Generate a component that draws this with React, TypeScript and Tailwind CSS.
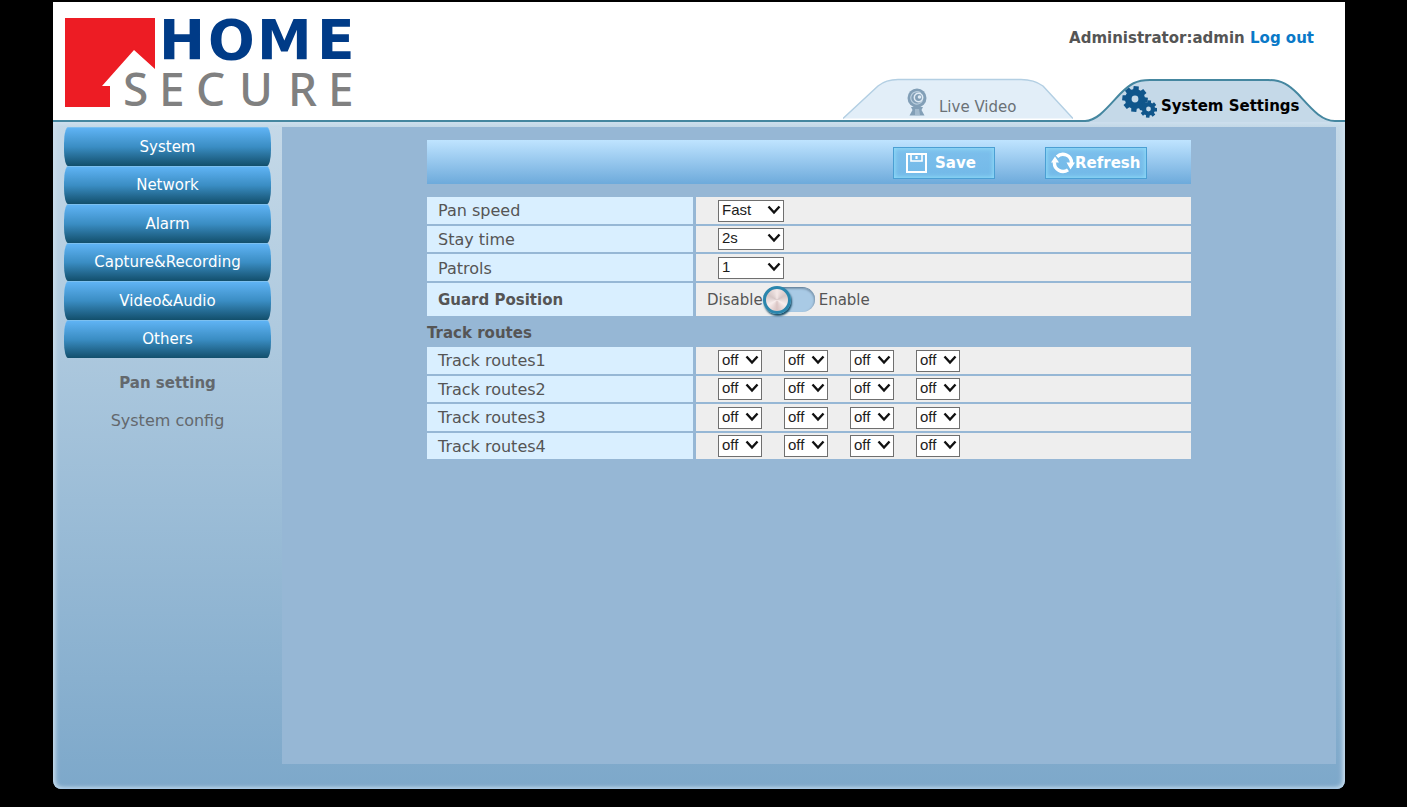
import { useState } from 'react'
import type { ReactNode } from 'react'

const menuItems = ['System', 'Network', 'Alarm', 'Capture&Recording', 'Video&Audio', 'Others']
const routes = [1, 2, 3, 4]
const points = [1, 2, 3, 4]

function gearPath(cx: number, cy: number, outer: number, inner: number, hole: number) {
  const teeth = 8
  const pts: string[] = []
  for (let i = 0; i < teeth; i++) {
    const base = (i / teeth) * Math.PI * 2 + 0.1
    const steps: [number, number][] = [[-0.28, inner], [-0.2, outer], [0.2, outer], [0.28, inner]]
    steps.forEach(([a, r]) => {
      pts.push(`${(cx + Math.cos(base + a) * r).toFixed(2)} ${(cy + Math.sin(base + a) * r).toFixed(2)}`)
    })
  }
  return `M${pts.join('L')}Z M${cx - hole} ${cy}a${hole} ${hole} 0 1 0 ${hole * 2} 0a${hole} ${hole} 0 1 0 ${-hole * 2} 0Z`
}

function GearsIcon() {
  return (
    <svg className="w-9 h-8 shrink-0" viewBox="0 0 36 32" fill="#10568b" fillRule="evenodd" aria-hidden="true">
      <path d={gearPath(14, 13, 13, 10, 3.4)} />
      <path d={gearPath(27.5, 23, 8.8, 6.6, 2.4)} />
    </svg>
  )
}

function WebcamIcon() {
  return (
    <svg className="w-5 h-7 shrink-0" viewBox="0 0 20 28" aria-hidden="true">
      <path d="M4 19h12l-1.500 3 3 5.500H2.500L5.500 22z" fill="#829fb7" />
      <path d="M8 21h4l1 6H8z" fill="#a2bace" />
      <circle cx="10" cy="10" r="9.500" fill="#829fb7" />
      <path d="M13.500 4.800a6.200 6.200 0 1 0 2 7.800" fill="none" stroke="#b9cddd" strokeWidth="1.200" />
      <circle cx="11.500" cy="9.500" r="4.200" fill="#829fb7" stroke="#dfeaf4" strokeWidth="1.500" />
      <circle cx="12.500" cy="9" r="1.800" fill="#dfeaf4" />
    </svg>
  )
}

function SaveIcon() {
  return (
    <svg className="w-[21px] h-5 shrink-0" viewBox="0 0 21 20" fill="none" stroke="white" aria-hidden="true">
      <path d="M1 1h19v18H1z" strokeWidth="2" />
      <path d="M5 1v7h11V1" strokeWidth="1.600" />
      <path d="M10.500 3v3" strokeWidth="2.200" />
    </svg>
  )
}

function RefreshIcon() {
  return (
    <svg className="w-6 h-6 shrink-0" viewBox="0 0 24 24" fill="none" stroke="white" strokeWidth="3.400" aria-hidden="true">
      <path d="M3.500 11A8.500 8.500 0 0 0 17 18.800" />
      <path d="M6 5.800A8.500 8.500 0 0 1 20.500 12" />
      <path d="M0 11.500 4 5.500 8 11.500z M24 11.500l-4.500 7-4-7z" fill="white" stroke="none" />
    </svg>
  )
}

function Logo() {
  return (
    <svg className="w-[300px] h-[100px] overflow-visible" viewBox="0 0 300 100" role="img" aria-label="Home Secure">
      <path d="M0 6h90v51L69 38 37 74h8v21H0z" fill="#ed1c24" />
      <g fontFamily="'DejaVu Sans', sans-serif" fontWeight="700" fontSize="55" fill="#003b87">
        <text x="94 143 192 252" y="47">HOME</text>
      </g>
      <g fontFamily="'Noto Sans', sans-serif" fontWeight="500" fontSize="46" fill="#808080">
        <text x="58 94 131 174 223 263" y="94">SECURE</text>
      </g>
    </svg>
  )
}

interface SelectProps {
  label: string
  id?: string
  options: string[]
  className: string
}

function Select({ label, id, options, className }: SelectProps) {
  return (
    <div className={`relative ${className}`}>
      <select
        id={id}
        aria-label={label}
        className="block w-full h-[22px] appearance-none border border-[#6f6f6f] bg-white pl-[3px] pb-[2px] font-['Liberation_Sans',Arial,sans-serif] text-[15px] leading-4 text-[#1c1c1c]"
      >
        {options.map((o) => (
          <option key={o}>{o}</option>
        ))}
      </select>
      <svg className="absolute right-[3px] top-[5px] w-[14px] h-[10px] pointer-events-none" viewBox="0 0 14 10" fill="none" aria-hidden="true">
        <path d="M1.500 1.500 7 7.500 12.500 1.500" stroke="#111" strokeWidth="2.400" />
      </svg>
    </div>
  )
}

interface RowProps {
  label: string
  htmlFor?: string
  tall?: boolean
  children: ReactNode
}

function Row({ label, htmlFor, tall, children }: RowProps) {
  return (
    <div className={`grid grid-cols-[266px_1fr] gap-[3px] ${tall ? 'h-[33px]' : ''}`}>
      <label
        htmlFor={htmlFor}
        className={`flex items-center bg-[#d9efff] pl-[11px] ${tall ? 'pt-[2px] text-[15px] font-bold' : 'pt-px'}`}
      >
        {label}
      </label>
      <div className={`flex items-center bg-[#eeeeee] ${tall ? 'pl-[11px] text-[15px]' : 'pt-px pl-[22px]'}`}>{children}</div>
    </div>
  )
}

function Header() {
  return (
    <header className="flex justify-between min-h-[120px] bg-white border-b-2 border-[#4587a0]">
      <div className="pl-3 pt-[10px]">
        <Logo />
      </div>
      <div className="flex flex-col justify-between items-end">
        <p className="pt-[26px] pr-[31px] text-[15px] font-bold">
          Administrator:admin{' '}
          <a href="#logout" className="text-[#0a79c8]">
            Log out
          </a>
        </p>
        <nav className="flex items-end gap-3 -mb-[2px] text-[15px]">
          <a href="#live" className="relative w-[230px] h-[43px] mb-px">
            <svg className="absolute inset-0 w-full h-full" viewBox="0 0 230 43" aria-hidden="true">
              <path d="M0 40.500 35 8Q43 1.500 55 1.500H178Q191 1.500 200 8L230 40.500z" fill="#e2eef8" />
              <path d="M0 40.500 35 8Q43 1.500 55 1.500H178Q191 1.500 200 8L230 40.500" fill="none" stroke="#b3cfe3" strokeWidth="1.500" />
            </svg>
            <span className="relative flex items-center gap-3 pt-[7px] pl-16">
              <WebcamIcon />
              <span className="pt-3 text-[#6a7176]">Live Video</span>
            </span>
          </a>
          <a href="#settings" className="relative w-[260px] h-[43px]">
            <svg className="absolute inset-0 w-full h-full" viewBox="0 0 260 43" aria-hidden="true">
              <path d="M0 43V42C12 42 22 29 35 15C45 5 51 1 65 1H183C197 1 204 6 213 15C226 29 236 42 250 42H260V43z" fill="#c5d9e8" />
              <path d="M0 42C12 42 22 29 35 15C45 5 51 1 65 1H183C197 1 204 6 213 15C226 29 236 42 250 42H260" fill="none" stroke="#4587a0" strokeWidth="2" />
            </svg>
            <span className="relative flex items-center gap-1 pt-[7px] pl-9">
              <GearsIcon />
              <span className="pt-2 font-bold text-black">System Settings</span>
            </span>
          </a>
        </nav>
      </div>
    </header>
  )
}

function Sidebar() {
  return (
    <nav className="w-[229px] shrink-0 px-[11px]">
      <ul className="grid grid-rows-6 h-[231px] text-[15px]">
        {menuItems.map((item) => (
          <li key={item}>
            <button
              type="button"
              className="block w-full h-full rounded-[4px/16px] border-t border-[#7cc0f0] bg-linear-to-b from-[#5fb3f4] via-[#3a8dc3] to-[#124f6c] pt-px text-white"
            >
              {item}
            </button>
          </li>
        ))}
      </ul>
      <ul className="pt-[7px] text-center text-[#63686d]">
        <li>
          <a href="#pan" className="block py-2 text-[15px] font-bold">
            Pan setting
          </a>
        </li>
        <li>
          <a href="#config" className="block py-2">
            System config
          </a>
        </li>
      </ul>
    </nav>
  )
}

const toolButton =
  'flex items-center w-[102px] h-8 border border-[#4b9fd3] bg-linear-to-b from-[#7dbfec] to-[#72b9e8] shadow-[inset_0_0_4px_1px_#8fdcf8] text-[15px] font-bold text-white'

export default function App() {
  const [guard, setGuard] = useState(false)

  return (
    <div className="flex flex-col min-h-screen bg-black pt-[2px] pb-[18px] pl-[53px] pr-[62px] font-['DejaVu_Sans',Verdana,sans-serif] text-base leading-[21px] text-[#555555]">
      <div className="flex flex-col flex-1 rounded-b-lg overflow-hidden">
        <Header />
        <div className="flex flex-1 pt-[5px] pb-[25px] pr-[9px] rounded-b-lg bg-linear-to-b from-[#c5d9e8] to-[#7da8ca] shadow-[inset_0_-1px_1px_#a6c8e6,inset_-2px_0_5px_#d2e3f0,inset_2px_0_5px_#cfe0ee]">
          <Sidebar />
          <main className="flex-1 bg-[#96b7d5] pt-[13px] px-4">
            <form className="w-full max-w-[764px] mx-auto" onSubmit={(e) => e.preventDefault()}>
              <div className="flex items-center justify-end gap-[50px] h-11 pt-px pr-11 bg-linear-to-b from-[#bfe4ff] to-[#6daadb]">
                <button type="submit" className={`${toolButton} pl-3 gap-2`}>
                  <SaveIcon />
                  <span className="pt-[2px]">Save</span>
                </button>
                <button type="button" className={`${toolButton} pl-[5px]`}>
                  <RefreshIcon />
                  <span className="pt-[2px]">Refresh</span>
                </button>
              </div>

              <div className="grid grid-rows-3 gap-[2px] h-[84px] mt-[13px]">
                <Row label="Pan speed" htmlFor="speed">
                  <Select id="speed" label="Pan speed" options={['Fast', 'Medium', 'Slow']} className="w-[66px]" />
                </Row>
                <Row label="Stay time" htmlFor="stay">
                  <Select id="stay" label="Stay time" options={['2s', '5s', '10s']} className="w-[66px]" />
                </Row>
                <Row label="Patrols" htmlFor="patrols">
                  <Select id="patrols" label="Patrols" options={['1', '2', '3']} className="w-[66px]" />
                </Row>
              </div>
              <div className="pt-[2px]">
                <Row label="Guard Position" htmlFor="guard" tall>
                  <span className="pt-[2px]">Disable</span>
                  <input
                    id="guard"
                    type="checkbox"
                    role="switch"
                    checked={guard}
                    onChange={(e) => setGuard(e.target.checked)}
                    className="flex items-center w-[52px] h-[25px] appearance-none rounded-full border-t border-[#6d8aa3] bg-[#a9cae5] shadow-[inset_-1px_1px_2px_#7c98b0] before:block before:w-7 before:h-7 before:rounded-full before:border-[3px] before:border-[#2b86ad] before:bg-[conic-gradient(#f4e8e7,#d5c6c6,#f8eeed,#d9c3c2,#f8eeed,#d5c6c6,#f4e8e7)] before:shadow-[1px_2px_2px_#174d68] checked:before:ml-6"
                  />
                  <span className="pt-[2px] pl-1">Enable</span>
                </Row>
              </div>

              <fieldset>
                <legend className="pt-[7px] pb-[3px] text-[15px] font-bold">Track routes</legend>
                <div className="grid grid-rows-4 gap-[2px] h-28">
                  {routes.map((n) => (
                    <Row key={n} label={`Track routes${n}`} htmlFor={`route-${n}-1`}>
                      <div className="flex gap-[22px]">
                        {points.map((p) => (
                          <Select
                            key={p}
                            id={`route-${n}-${p}`}
                            label={`Track routes${n}, point ${p}`}
                            options={['off', '1', '2', '3']}
                            className="w-11"
                          />
                        ))}
                      </div>
                    </Row>
                  ))}
                </div>
              </fieldset>
            </form>
          </main>
        </div>
      </div>
    </div>
  )
}
